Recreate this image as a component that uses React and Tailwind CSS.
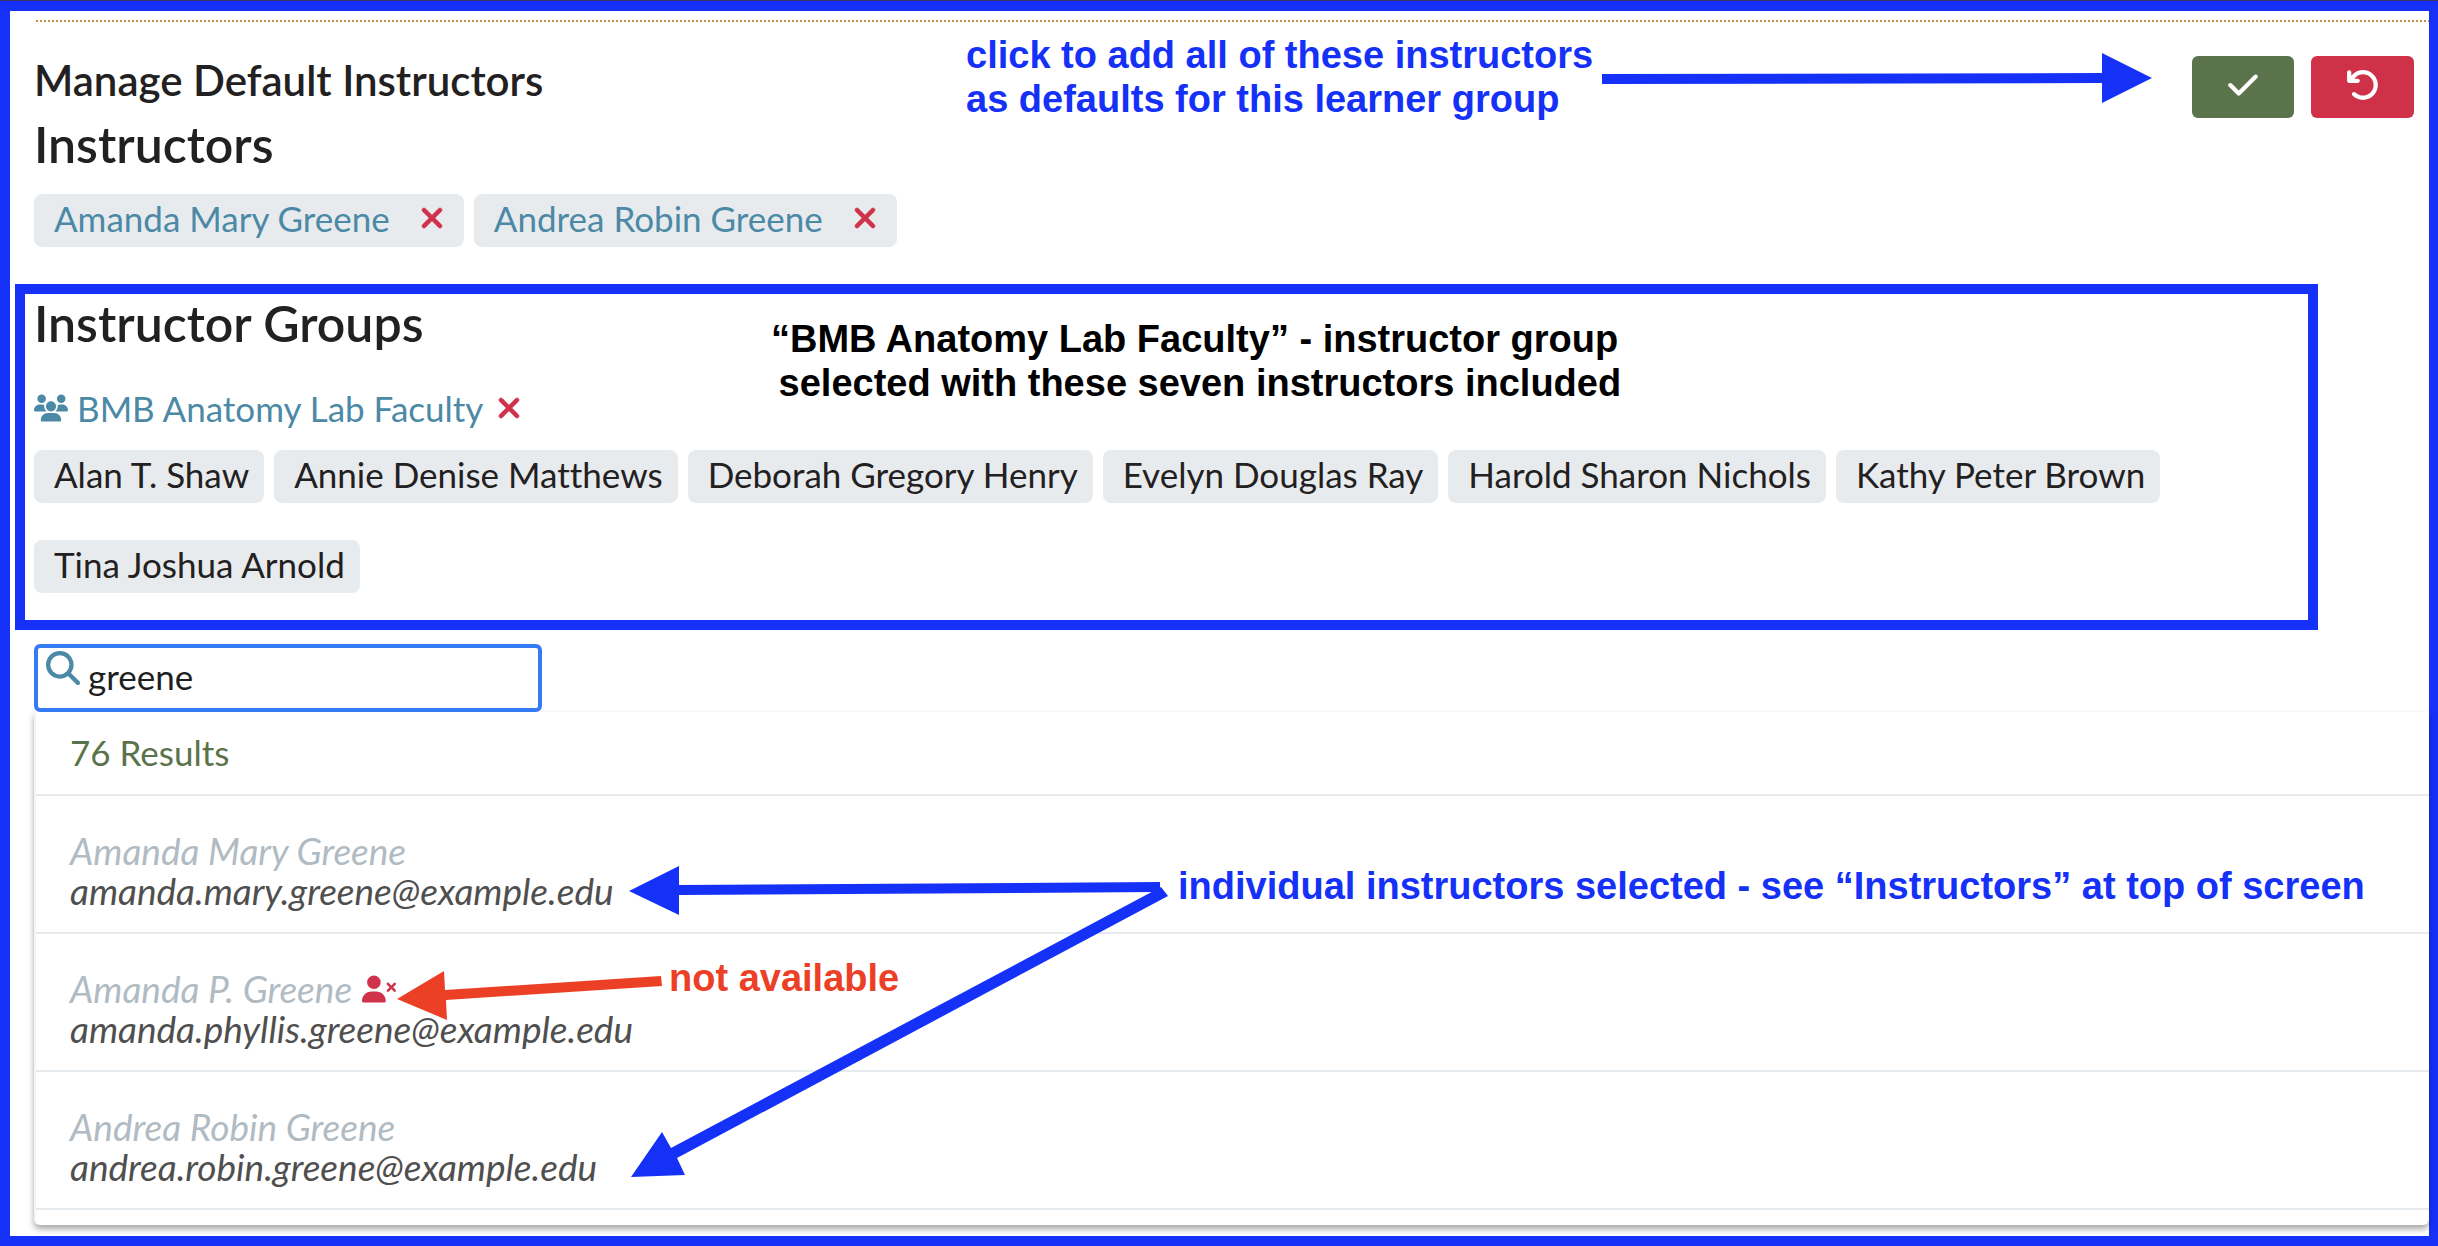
import React from 'react';
import {
  FaArrowRotateLeft,
  FaCheck,
  FaMagnifyingGlass,
  FaUsers,
  FaUserXmark,
  FaXmark,
} from 'react-icons/fa6';

const instructors = ['Amanda Mary Greene', 'Andrea Robin Greene'];

const groupMembers = [
  'Alan T. Shaw',
  'Annie Denise Matthews',
  'Deborah Gregory Henry',
  'Evelyn Douglas Ray',
  'Harold Sharon Nichols',
  'Kathy Peter Brown',
  'Tina Joshua Arnold',
];

const results = [
  { name: 'Amanda Mary Greene', email: 'amanda.mary.greene@example.edu' },
  { name: 'Amanda P. Greene', email: 'amanda.phyllis.greene@example.edu', unavailable: true },
  { name: 'Andrea Robin Greene', email: 'andrea.robin.greene@example.edu' },
];

function Header() {
  return (
    <header className="flex items-start justify-between">
      <div>
        <h1 className="text-[42px] leading-[60px] font-semibold">Manage Default Instructors</h1>
        <h2 className="mt-1 text-[50px] leading-[60px] font-semibold">Instructors</h2>
      </div>
      <div className="mt-[6px] mr-[15px] flex gap-[17px]">
        <button
          type="button"
          aria-label="Save"
          className="flex h-[62px] w-[102px] items-center justify-center rounded-md bg-[#5b734b] pb-1 text-white"
        >
          <FaCheck className="size-[34px]" />
        </button>
        <button
          type="button"
          aria-label="Cancel"
          className="flex h-[62px] w-[103px] items-center justify-center rounded-md bg-[#cf3248] pb-1 text-white"
        >
          <FaArrowRotateLeft className="size-[34px]" />
        </button>
      </div>
    </header>
  );
}

function SelectedInstructors() {
  return (
    <ul className="mt-5 flex flex-wrap gap-[10px]">
      {instructors.map((name) => (
        <li key={name}>
          <button
            type="button"
            className="flex items-center gap-[26px] rounded-lg bg-[#e8ebee] pr-4 pb-[5px] pl-5 text-[35px] leading-[48px] text-[#4b89a6]"
          >
            {name}
            <FaXmark strokeWidth={10} className="size-[32px] text-[#d0324a]" />
          </button>
        </li>
      ))}
    </ul>
  );
}

function InstructorGroup() {
  return (
    <section className="relative mt-[37px] mr-[111px] -ml-[19px] border-[10px] border-[#1531f7] pb-[27px] pl-[9px]">
      <h2 className="text-[50px] leading-[58px] font-semibold">Instructor Groups</h2>
      <button type="button" className="mt-8 flex items-center text-[35px] leading-[48px] text-[#4b89a6]">
        <FaUsers className="size-[34px]" />
        <span className="ml-[9px]">BMB Anatomy Lab Faculty</span>
        <FaXmark strokeWidth={10} className="ml-[10px] size-[32px] text-[#d0324a]" />
      </button>
      <ul className="mt-[18px] flex flex-wrap gap-x-[10px] gap-y-[37px]">
        {groupMembers.map((name) => (
          <li key={name} className="rounded-lg bg-[#e8ebee] pr-[15px] pb-[5px] pl-5 text-[35px] leading-[48px]">
            {name}
          </li>
        ))}
      </ul>
      <p className="absolute top-[23px] left-[743px] text-center font-[Liberation_Sans,Arial,sans-serif] text-[38px] leading-[44px] font-bold whitespace-nowrap text-black">
        “BMB Anatomy Lab Faculty” - instructor group
        <br />
        &nbsp;selected with these seven instructors included
      </p>
    </section>
  );
}

function Search() {
  return (
    <div className="relative mt-[14px] w-[508px]">
      <FaMagnifyingGlass className="absolute top-[7px] left-3 size-[34px] text-[#4b89a6]" />
      <input
        type="text"
        aria-label="Search instructors"
        defaultValue="greene"
        className="block h-[68px] w-full rounded-md border-4 border-[#357bf5] bg-transparent pb-1 pl-[50px] text-[35px] text-[#1f1f1f] outline-none"
      />
    </div>
  );
}

function Results() {
  return (
    <div className="rounded-b-md border-l-2 border-[#f3f4f4] pb-[15px] shadow-[0_4px_6px_rgba(0,0,0,0.35)]">
      <p className="border-b-2 border-[#e6ebef] pt-4 pb-[18px] pl-[34px] text-[35px] leading-[48px] text-[#5b734b]">
        76 Results
      </p>
      <ul>
        {results.map(({ name, email, unavailable }) => (
          <li key={email} className="border-b-2 border-[#e6ebef] pt-[35px] pb-[21px] pl-[34px] text-[37px] leading-[40px] italic">
            <div className="flex items-center gap-[10px] text-[#b0bbc3]">
              {name}
              {unavailable && <FaUserXmark title="Not available" className="size-[34px] text-[#d0324a]" />}
            </div>
            <div className="text-[#4f4f4f]">{email}</div>
          </li>
        ))}
      </ul>
    </div>
  );
}

function Annotations() {
  return (
    <div className="pointer-events-none font-[Liberation_Sans,Arial,sans-serif] text-[38px] leading-[44px] font-bold whitespace-nowrap text-[#1531f7]">
      <p className="absolute top-[32px] left-[966px]">
        click to add all of these instructors
        <br />
        as defaults for this learner group
      </p>
      <p className="absolute top-[863px] left-[1178px]">
        individual instructors selected - see “Instructors” at top of screen
      </p>
      <p className="absolute top-[955px] left-[669px] text-[#eb4026]">not available</p>
      <svg className="absolute top-0 left-0 h-[1246px] w-[2438px]" viewBox="0 0 2438 1246" aria-hidden="true">
        <g fill="#1531f7" stroke="none">
          <path d="M1602 73L2102 72V52L2152 77L2102 102V82L1602 83Z" />
          <path d="M1160 881L679 884V865L629 890L679 914V894L1160 891Z" />
          <path d="M1161 886L1168 895L677 1157L685 1174L631 1176L662 1131L671 1147Z" />
        </g>
        <path fill="#eb4026" d="M661 975L445 989L444 970L397 998L447 1019L446 999L662 985Z" />
      </svg>
    </div>
  );
}

export default function App() {
  return (
    <main className="relative overflow-hidden border-t border-[#3a3460] bg-white font-[Lato,sans-serif] text-[#222021] [font-variant-ligatures:none]">
      <div className="border-y-[10px] border-r-[9px] border-l-[10px] border-[#1531f7] pt-[9px] pb-[11px] pl-6">
        <div className="mb-7 ml-[2px] h-[2px] bg-[repeating-linear-gradient(to_right,#c98e46_0_2px,transparent_2px_4px)]" />
        <Header />
        <SelectedInstructors />
        <InstructorGroup />
        <Search />
        <Results />
      </div>
      <Annotations />
    </main>
  );
}
